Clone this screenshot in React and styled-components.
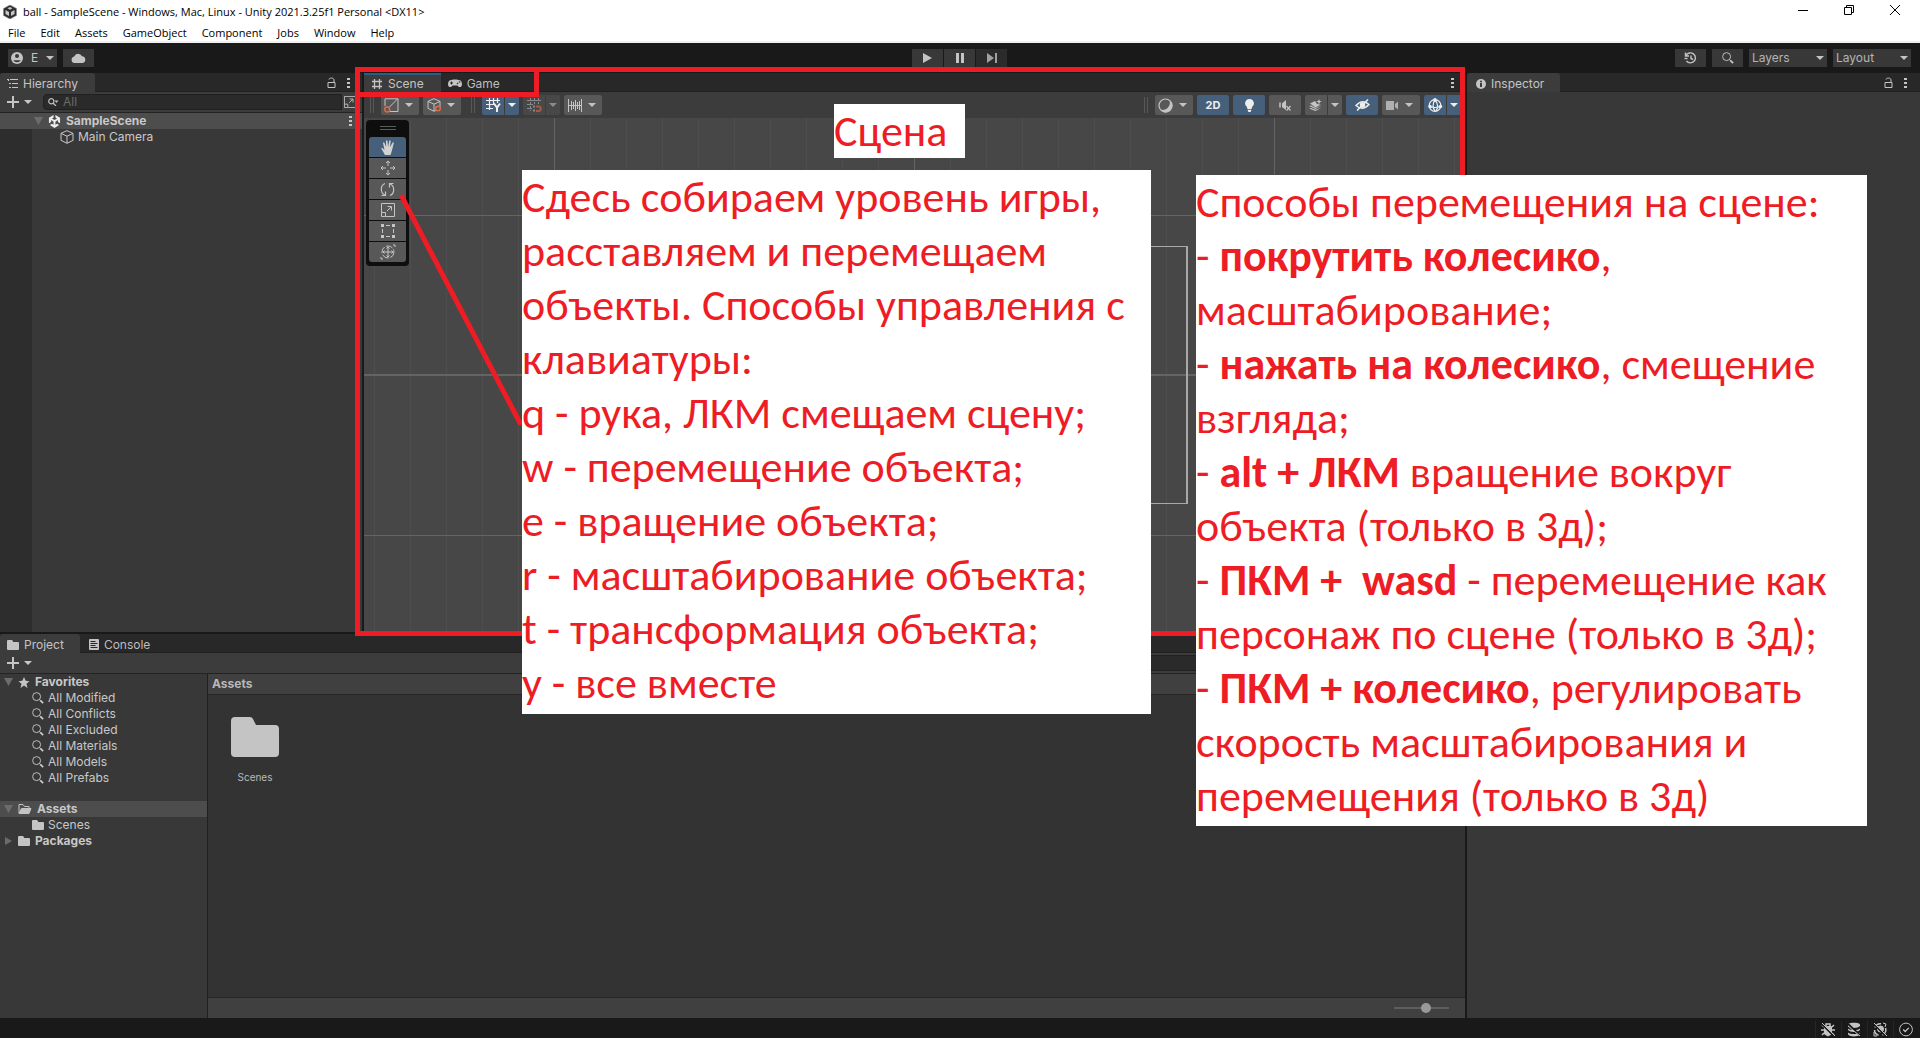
import React from 'react';
import styled, { createGlobalStyle, css } from 'styled-components';

const UI_FONT = 'Inter, "Liberation Sans", sans-serif';
const OS_FONT = '"Open Sans", "Noto Sans", sans-serif';
const NOTE_FONT = 'Carlito, Lato, "Open Sans", sans-serif';
const RED = '#ee1c24';

const GlobalStyle = createGlobalStyle`
  *, *::before, *::after { box-sizing: border-box; }
  html, body, #root { height: 100%; margin: 0; }
  body { background: #191919; overflow: hidden; color: #c8c8c8; font: 12px/16px ${UI_FONT}; }
  button, input, select { font: inherit; color: inherit; margin: 0; padding: 0; border: 0; background: none; border-radius: 0; outline: 0; }
  svg { display: block; flex: none; }
  ul { list-style: none; margin: 0; padding: 0; }
  p, h1, h2 { margin: 0; font: inherit; }
`;

const Window = styled.div`
  height: 100vh;
  display: grid;
  grid-template-rows: 43px 30px minmax(0, 1fr) 20px;
`;

/* ---------- title bar and menu ---------- */
const Chrome = styled.header`
  background: #fff;
  color: #000;
  border-bottom: 2px solid #f0f0f0;
  font: 11px/16px ${OS_FONT};
`;
const TitleRow = styled.div`
  display: flex;
  align-items: center;
  height: 24px;
  padding: 0 17px 0 3px;
  gap: 6px;
`;
const WindowTitle = styled.h1`
  flex: 1;
`;
const WindowButtons = styled.div`
  display: flex;
  gap: 30px;
  padding-bottom: 4px;
`;
const WindowButton = styled.button`
  width: 16px;
  height: 16px;
  display: grid;
  place-items: center;
`;
const MenuRow = styled.nav`
  display: flex;
  gap: 15px;
  padding: 1px 8px 0;
  button { height: 16px; }
`;

/* ---------- main toolbar ---------- */
const MainToolbar = styled.div`
  display: grid;
  grid-template-columns: 1fr auto 1fr;
  align-items: center;
  padding: 0 9px 0 8px;
  background: #191919;
`;
const ToolGroup = styled.div`
  display: flex;
  gap: ${p => p.$gap || 6}px;
  justify-content: ${p => p.$end ? 'flex-end' : 'flex-start'};
`;
const BarButton = styled.button`
  height: 18px;
  min-width: 31px;
  padding: 0 ${p => p.$pad || 0}px;
  display: flex;
  align-items: center;
  justify-content: center;
  gap: 8px;
  background: ${p => p.$dim ? '#2b2b2b' : '#383838'};
  color: ${p => p.$dim ? '#a0a0a0' : '#c4c4c4'};
`;
const SelectBox = styled.label`
  display: grid;
  align-items: center;
  width: 78px;
  height: 18px;
  background: #383838;
  color: #b4b4b4;
  select { grid-area: 1 / 1; appearance: none; width: 100%; height: 18px; padding-left: 3px; }
  svg { grid-area: 1 / 1; justify-self: end; margin-right: 3px; pointer-events: none; color: #c4c4c4; }
`;

/* ---------- docking layout ---------- */
const Workspace = styled.main`
  display: grid;
  grid-template-columns: minmax(0, 1fr) 453px;
  gap: 2px;
  min-height: 0;
`;
const LeftDock = styled.div`
  display: grid;
  grid-template-rows: minmax(0, 1fr) 384px;
  gap: 2px;
  min-height: 0;
`;
const UpperDock = styled.div`
  display: grid;
  grid-template-columns: 362px minmax(0, 1fr);
  gap: 2px;
  min-height: 0;
`;
const Panel = styled.section`
  display: flex;
  flex-direction: column;
  min-width: 0;
  min-height: 0;
  background: #383838;
  position: ${p => p.$anchor ? 'relative' : 'static'};
`;
const TabBar = styled.div`
  display: flex;
  align-items: stretch;
  height: 19px;
  flex: none;
  background: #282828;
  box-shadow: inset 0 -1px #202020;
`;
const Tab = styled.button`
  display: flex;
  align-items: center;
  gap: 5px;
  padding: 2px ${p => p.$right || 16}px 0 ${p => p.$left || 7}px;
  color: ${p => p.$active ? '#c4c4c4' : '#bdbdbd'};
  ${p => p.$active && css`background: #3c3c3c; border-radius: 3px 3px 0 0;`}
  ${p => p.$focus && css`box-shadow: inset 0 2px #2c5d87; border-radius: 0;`}
`;
const TabActions = styled.div`
  margin-left: auto;
  display: flex;
  align-items: center;
  gap: 11px;
  padding-right: ${p => p.$right}px;
  button { display: block; }
`;
const PanelToolbar = styled.div`
  display: flex;
  align-items: center;
  height: 21px;
  flex: none;
  padding: 0 0 0 7px;
  background: #3c3c3c;
  border-bottom: 1px solid #232323;
`;
const AddButton = styled.button`
  display: flex;
  align-items: center;
  gap: 5px;
  width: 36px;
`;
const SearchBox = styled.label`
  display: flex;
  align-items: center;
  gap: 4px;
  height: 16px;
  flex: ${p => p.$width ? 'none' : 1};
  width: ${p => p.$width ? p.$width + 'px' : 'auto'};
  margin-left: ${p => p.$width ? 'auto' : '0'};
  margin-right: ${p => p.$right || 0}px;
  padding-left: 4px;
  background: #2a2a2a;
  border: 1px solid #202020;
  border-radius: 4px 0 0 4px;
  input { flex: 1; min-width: 0; height: 14px; }
  input::placeholder { color: #6a6a6a; opacity: 1; }
`;
const PickerButton = styled.button`
  display: flex;
  align-items: center;
  height: 16px;
  width: 20px;
  padding-left: 2px;
`;

/* ---------- hierarchy ---------- */
const HierarchyBody = styled.ul`
  flex: 1;
  background: linear-gradient(to right, #2d2d2d 32px, #383838 32px);
`;
const Row = styled.li`
  display: flex;
  align-items: center;
  gap: ${p => p.$strong ? 5 : 4}px;
  height: 16px;
  padding-left: ${p => p.$indent || 0}px;
  padding-right: 10px;
  font-weight: ${p => p.$strong ? 700 : 400};
  background: ${p => p.$selected ? '#4d4d4d' : 'transparent'};
  margin-top: ${p => p.$apart ? 15 : 0}px;
  > :last-child:not(:nth-child(-n+3)) { margin-left: auto; }
`;

/* ---------- scene ---------- */
const SceneToolbar = styled.div`
  display: flex;
  align-items: center;
  gap: 4px;
  height: 26px;
  flex: none;
  padding-right: 4px;
  background: #3c3c3c;
`;
const Grip = styled.span`
  width: 4px;
  height: 16px;
  margin: 0 3px 0 ${p => p.$push ? 'auto' : '6px'};
  border: solid #585858;
  border-width: 0 1px;
`;
const sceneFace = css`
  height: 20px;
  display: flex;
  align-items: center;
  justify-content: center;
  background: ${p => p.$on ? '#46607c' : p.$off ? '#484848' : '#585858'};
  color: ${p => p.$on ? '#eeeeee' : p.$off ? '#8a8a8a' : '#c4c4c4'};
`;
const SceneButton = styled.button`
  ${sceneFace}
  width: ${p => p.$menu ? 38 : 32}px;
  gap: ${p => p.$menu ? 6 : 0}px;
  padding-right: ${p => p.$menu ? 3 : 0}px;
  border-radius: 2px;
  font-weight: 700;
  font-size: 11px;
`;
const Split = styled.div`
  display: grid;
  grid-template-columns: 22px 14px;
  gap: 1px;
  border-radius: 2px;
  overflow: hidden;
`;
const SplitPart = styled.button`${sceneFace}`;

const Viewport = styled.div`
  position: relative;
  flex: 1;
  overflow: hidden;
  background: #474747;
`;
const GridLines = styled.svg`
  width: 100%;
  height: 100%;
`;
const ToolPalette = styled.div`
  position: absolute;
  left: 2px;
  top: 2px;
  width: 43px;
  padding: 6px 3px 4px;
  display: grid;
  gap: 1px;
  background: #0e0e0e;
  border-radius: 4px;
`;
const PaletteGrip = styled.span`
  justify-self: center;
  width: 16px;
  height: 4px;
  margin-bottom: 6px;
  border: solid #5c5c5c;
  border-width: 1px 0;
`;
const PaletteButton = styled.button`
  ${sceneFace}
  &:nth-of-type(1) { border-radius: 3px 3px 0 0; }
  &:last-child { border-radius: 0 0 3px 3px; }
`;

/* ---------- project ---------- */
const ProjectBody = styled.div`
  flex: 1;
  min-height: 0;
  display: grid;
  grid-template-columns: 208px minmax(0, 1fr);
`;
const Tree = styled.ul`
  border-right: 1px solid #202020;
  background: #383838;
`;
const Browser = styled.div`
  display: flex;
  flex-direction: column;
  background: #333;
`;
const Crumb = styled.h2`
  height: 21px;
  padding: 2px 4px;
  font-weight: 700;
  background: #404040;
  border-bottom: 1px solid #262626;
  color: #b8b8b8;
`;
const Files = styled.div`
  flex: 1;
  padding: 22px 23px;
`;
const FileItem = styled.button`
  display: grid;
  justify-items: center;
  gap: 12px;
  width: 48px;
  font-size: 10px;
  color: #bababa;
`;
const BrowserFooter = styled.div`
  display: flex;
  justify-content: flex-end;
  align-items: center;
  height: 21px;
  padding-right: 16px;
  background: #404040;
  border-top: 1px solid #262626;
`;
const ZoomSlider = styled.input`
  appearance: none;
  width: 55px;
  height: 10px;
  background: linear-gradient(#5e5e5e, #5e5e5e) center / 100% 2px no-repeat;
  &::-webkit-slider-thumb { appearance: none; width: 10px; height: 10px; border-radius: 50%; background: #999; }
`;
const StatusBar = styled.footer`
  display: flex;
  justify-content: flex-end;
  align-items: stretch;
  padding: 3px 1px 0 0;
  background: #191919;
  color: #c4c4c4;
`;
const StatusButton = styled.button`
  display: flex;
  align-items: center;
  width: 26px;
  padding: 0 0 0 5px;
  border-left: 1px solid #262626;
`;

/* ---------- annotations drawn over the editor ---------- */
const Frame = styled.div`
  position: absolute;
  z-index: 2;
  top: -6px;
  left: -9px;
  border: 5px solid ${RED};
  pointer-events: none;
  ${p => p.$tabs ? css`width: 184px; height: 30px;` : css`right: 0; bottom: -4px;`}
`;
const Pointer = styled.svg`
  position: absolute;
  z-index: 2;
  left: 34px;
  top: 120px;
  pointer-events: none;
`;
const Note = styled.div`
  position: absolute;
  z-index: 3;
  left: ${p => p.$x}px;
  top: ${p => p.$y}px;
  width: ${p => p.$w}px;
  padding-bottom: ${p => p.$tail || 0}px;
  background: #fff;
  color: ${RED};
  font: 44px/54px ${NOTE_FONT};
  white-space: pre;
`;

/* ---------- icons ---------- */
const Svg = ({ w = 14, h = w, vb, children, ...rest }) => (
  <svg width={w} height={h} viewBox={vb || `0 0 ${w} ${h}`} fill="none" stroke="currentColor" aria-hidden="true" {...rest}>{children}</svg>
);
const Caret = ({ w = 8 }) => <Svg w={w} h={4} vb="0 0 8 4" stroke="none"><path d="M0 0h8L4 4z" fill="currentColor" /></Svg>;
const Fold = ({ open }) => <Svg w={9} h={8} stroke="none">{open ? <path d="M0 0h9L4.500 8z" fill="#6c6c6c" /> : <path d="M1 0v8l7-4z" fill="#6c6c6c" />}</Svg>;
const Dots = () => <Svg w={3} h={12} stroke="none"><path d="M0 1h3v2H0zM0 5h3v2H0zM0 9h3v2H0z" fill="#c4c4c4" /></Svg>;
const Lock = () => <Svg w={9} h={11} stroke="#c4c4c4"><path d="M1 5.500h7v5H1zM2 2.500C2 .8 7 .2 7 3v2.500" /></Svg>;
const Plus = () => <Svg w={12}><path d="M6 0v12M0 6h12" stroke="#c4c4c4" strokeWidth="2" /></Svg>;
const ListIcon = () => <Svg w={11} h={11} stroke="#c4c4c4"><path d="M3 1.500h8M5 5.500h6M5 9.500h6M0 1.500h2M2 5.500h2M2 9.500h2M1.500 1v2" /></Svg>;
const HashIcon = () => <Svg w={12}><path d="M3.500 1v10M8.500 1v10M1 3.500h10M1 8.500h10" stroke="#c4c4c4" strokeWidth="1.300" /></Svg>;
const Gamepad = () => <Svg w={14} h={9} stroke="none"><path d="M3.500 1C6 .4 8 .4 10.500 1 13 1 14 3 14 5.500 13.700 8.500 11 9 9.500 6.500h-5C3 9 .3 8.500 0 5.500 0 3 1 1 3.500 1z" fill="#c4c4c4" /><path d="M3.500 2.500v3M2 4h3" stroke="#282828" /><circle cx="9.500" cy="4.500" r=".8" fill="#282828" /><circle cx="11.500" cy="3" r=".8" fill="#282828" /></Svg>;
const InfoIcon = () => <Svg w={10} h={10} stroke="none"><circle cx="5" cy="5" r="5" fill="#c4c4c4" /><path d="M4 4h2v4H4zM4 1.700h2v1.500H4z" fill="#3c3c3c" /></Svg>;
const Magnifier = ({ w = 13 }) => <Svg w={w} vb="0 0 13 13"><circle cx="5" cy="5" r="4.300" /><path d="M8 8l1.500 1.500" /><path d="M9 9l3 3" strokeWidth="2" /></Svg>;
const SearchMini = () => <Svg w={11} h={8} stroke="#bdbdbd"><circle cx="3.300" cy="3.300" r="2.600" strokeWidth="1.200" /><path d="M5 5l3 3" strokeWidth="1.300" /><path d="M6.500 2.500h4L8.500 5z" fill="#bdbdbd" stroke="none" /></Svg>;
const ExpandIcon = ({ w = 14 }) => <Svg w={w} vb="0 0 14 14"><path d="M.5 9.500v-9h13v13H5M.5 9.500v4h4v-4zM6 8l4-4M6.500 3.500h4v4" /></Svg>;
const UnityMark = ({ w = 13, dark }) => (
  <Svg w={w} vb="0 0 14 14" stroke="none">
    {dark && <path d="M7 0l6.500 3.500v7L7 14 .5 10.500v-7z" fill="#2e2e2e" stroke="#8a8a8a" strokeWidth=".6" />}
    {dark
      ? <path d="M7 2l2.500 1.300L7 4.700 4.500 3.300zM2.500 5L6 7v4L2.500 9zM11.500 5L8 7v4l3.500-2z" fill="#c8c8c8" />
      : <path d="M6 0v2.800L4.300 3.800 7 5.400l2.700-1.600L8 2.800V0l5 3v6l-2.300-1.400V5.500L8 7.200v3.200l1.700-1L12 10.800 7 14l-5-3.200 2.300-1.400 1.700 1V7.200L3.300 5.500v2.100L1 9V3z" fill="#eee" />}
  </Svg>
);
const Cube = ({ dot }) => <Svg w={14} h={14}><path d="M7 .7l6 2.700v7L7 13.300l-6-3v-7zM1 3.400l6 2.800 6-2.800M7 6.200v7" />{dot && <circle cx="11" cy="10.500" r="2.300" stroke="#e06a45" strokeWidth="1.500" fill="#585858" />}</Svg>;
const FolderIcon = ({ w = 12, h = 10 }) => <Svg w={w} h={h} vb="0 0 48 40" stroke="none"><path d="M4 0h15q2 0 3 2l3 6h19q4 0 4 4v24q0 4-4 4H4q-4 0-4-4V4q0-4 4-4z" fill="#c4c4c4" /></Svg>;
const FolderOpen = () => <Svg w={14} h={10} stroke="#c4c4c4"><path d="M1 9V.5h4l1.500 2H11V4" /><path d="M1 9.500L3.500 4.500H13L11 9.500z" fill="#c4c4c4" /></Svg>;
const StarIcon = () => <Svg w={12} h={11} stroke="none" vb="0 0 12 12"><path d="M6 0l1.800 4.200 4.200.3-3.300 2.800L9.800 12 6 9.400 2.200 12l1.100-4.700L0 4.500l4.200-.3z" fill="#c4c4c4" /></Svg>;
const ConsoleIcon = () => <Svg w={10} h={11} stroke="none"><rect width="10" height="11" rx="1" fill="#c4c4c4" /><path d="M1.500 2.500h5M1.500 4.500h7M1.500 6.500h5M1.500 8.500h7" stroke="#282828" /></Svg>;
const PersonIcon = () => <Svg w={12} stroke="none"><circle cx="6" cy="6" r="6" fill="#c4c4c4" /><circle cx="6" cy="4" r="2" fill="#383838" /><path d="M2.300 8.200h7.400C8.500 10.800 3.500 10.800 2.300 8.200z" fill="#383838" /></Svg>;
const CloudIcon = () => <Svg w={15} h={10} stroke="none"><path d="M3.500 10a3.300 3.300 0 0 1-.3-6.500A4.200 4.200 0 0 1 11 3.300a3.400 3.400 0 0 1 .7 6.700z" fill="#c4c4c4" /></Svg>;
const HistoryIcon = () => <Svg w={13} h={12} strokeWidth="1.400"><path d="M2 3.500A5 5 0 1 1 2.500 9M1.500 .5v3.500h3.500M7 3.500v3l2 1" /><path d="M.5 6.500h3" /></Svg>;
const LineBox = () => <Svg w={15}><path d="M1 8V.8h13v12.700H6M5 9.500l8.500-8.500" /><circle cx="3.200" cy="11.500" r="2.500" stroke="#e06a45" strokeWidth="1.500" /></Svg>;
const GridY = () => <Svg w={15} h={14}><path d="M3.500 0v12M7.500 0v7M11.500 0v5M0 2.500h14M0 6.500h7M0 10.500h7" strokeWidth="1.200" /><path d="M8 5.500l3 4 3-4M11 9v5" strokeWidth="2" /></Svg>;
const GridSnap = () => <Svg w={15} h={14}><path d="M3.500 0v13M7.500 0v6M11.500 0v6M0 2.500h14M0 6.500h6M0 10.500h5" strokeDasharray="3 1" /><path d="M9 8.500h2.500a2 2 0 0 1 0 4.500H9" stroke="#a05c4a" strokeWidth="2" /><path d="M6 8.500h2M6 12.500h2" strokeWidth="2" /></Svg>;
const SnapRuler = () => <Svg w={14} h={13}><path d="M.5 0v13M13.500 0v13M3.500 2v9M5.500 3v7M7.500 1v11M9.500 3v7M11.500 2v9M0 6.500h14" /></Svg>;
const Sphere = () => <Svg w={15} stroke="none" vb="0 0 15 15"><circle cx="7.500" cy="7.500" r="6.500" stroke="#c4c4c4" strokeWidth="1.200" /><path d="M11.500 2.500a6.500 6.500 0 1 1-9 9c4.500 2 11-3 9-9z" fill="#c4c4c4" /></Svg>;
const Bulb = () => <Svg w={9} h={13} stroke="none"><path d="M4.500 0a4.300 4.300 0 0 1 2.700 7.700L6.500 10h-4l-.7-2.300A4.300 4.300 0 0 1 4.500 0zM2.800 10.700h3.400v1L5.500 13h-2l-.7-1.300z" fill="currentColor" /></Svg>;
const Mute = () => <Svg w={12} h={11}><path d="M1 2.500v5" strokeWidth="1.500" /><path d="M3 3.500L7 0v10L3 7z" fill="currentColor" stroke="none" /><path d="M7.500 6l4 4.500M11.500 6l-4 4.500" strokeWidth="1.200" /></Svg>;
const Layers = () => <Svg w={14} h={12} stroke="none"><path d="M1 4.500L6 2l2 3 4 .5-5.500 3zM0 7l2-.5L6.500 9 13 6.500 6.500 10zM0 9.500L2 9l4.500 1.700L12 9l-5.500 3zM10 0l.8 2 2.200.5-2.200.8L10 5.500l-.8-2.200L7 2.500 9.200 2z" fill="currentColor" /></Svg>;
const EyeOff = () => <Svg w={15} h={12} strokeWidth="1.500"><path d="M1 6.500Q7.500-.5 14 5.500 7.500 12.500 1 6.500z" /><circle cx="7.500" cy="6" r="2" fill="currentColor" /><path d="M2 11.500L13 .5" /></Svg>;
const Camera = () => <Svg w={13} h={9} stroke="none"><path d="M0 0h8v9H0zM9 3l3-2.500v8L9 6z" fill="#b0b0b0" /></Svg>;
const Gizmo = () => <Svg w={15} strokeWidth="1.200"><circle cx="7" cy="7.500" r="5.800" /><path d="M1 8c3 2 9 2 12 0M7 2C4.500 5 4.500 10 7 13M7 2c3 3 3.500 8 1 11" /><circle cx="7" cy="1.800" r="1.700" fill="currentColor" stroke="none" /><circle cx="2" cy="8.500" r="1.700" fill="currentColor" stroke="none" /><circle cx="12.500" cy="8.500" r="1.700" fill="currentColor" stroke="none" /></Svg>;
const Hand = () => <Svg w={14} h={15} stroke="none"><path d="M4 15L.3 8.500q.3-1.300 1.700 0L3.500 10 2 3q.6-1.300 1.500 0l1.700 4L5 1q.8-1.300 1.500 0l.6 6L8.200.8q1-1 1.500.2L9 7.300 11.600 2.500q1-.6 1.200.5l-1.600 6.500L10.500 12 9.500 15z" fill="#d2d2d2" /></Svg>;
const MoveIcon = () => <Svg w={16}><path d="M8 1v5M8 10v5M1 8h5M10 8h5M6 3l2-2 2 2M6 13l2 2 2-2M3 6L1 8l2 2M13 6l2 2-2 2" /></Svg>;
const RotateIcon = () => <Svg w={15} strokeWidth="1.200"><path d="M5.500 13.500C-.5 11 .5 3 5 1.500M9.500 1.500C15.500 4 14.500 12 10 13.500M1.500 13.500h4v-4M13.500 1.500h-4v4" /></Svg>;
const RectIcon = () => <Svg w={14}><path d="M5 1.500h4M5 12.500h4M1.500 5v4M12.500 5v4" /><path d="M0 0h3v3H0zM11 0h3v3h-3zM0 11h3v3H0zM11 11h3v3h-3z" fill="currentColor" stroke="none" /></Svg>;
const TransformIcon = () => <Svg w={16}><circle cx="8" cy="8" r="6" strokeDasharray="7 1.500" /><path d="M8 3v10M3 8h10M6.500 4.500L8 3l1.500 1.500M6.500 11.500L8 13l1.500-1.500M4.500 6.500L3 8l1.500 1.500M11.500 6.500L13 8l-1.500 1.500M13 1h2v2M1 13v2h2" /></Svg>;
const Bug = () => <Svg w={14} h={15}><path d="M3.500 4.500h7V12L7 14l-3.500-2z" fill="currentColor" /><path d="M5 4V2h4v2M1 3l2 2M13 3l-2 2M0 8h14M1 13l2-2M13 13l-2-2" strokeWidth="1.500" /><path d="M0 1l13 13" stroke="#191919" strokeWidth="2" /><path d="M1 1l13 13" /></Svg>;
const Cache = () => <Svg w={14} h={15} stroke="none"><path d="M1 2.500C1 0 13 0 13 2.500V4C11 6.500 3 6.500 1 4zM1 6.500c2 2 10 2 12 0V8c-2 2.500-10 2.500-12 0zM1 10.500c2 2 10 2 12 0v2c-2 2.500-10 2.500-12 0z" fill="currentColor" /><path d="M1 2l13 12" stroke="#191919" strokeWidth="2" /><path d="M1 4l12 10" stroke="currentColor" /></Svg>;
const LightOff = () => <Svg w={14} h={15}><path d="M2 5.500C3 3 5 1.500 8 1.800M12.500 6c1 3-.5 6-3 7M1.500 8c0 2 1.500 4.500 4 5.200" strokeWidth="1.500" /><circle cx="7.500" cy="7" r="3" fill="currentColor" /><path d="M0 1l13 13" stroke="#191919" strokeWidth="2" /><path d="M1 1l13 13M10 1l3 1-1 3M1 10v4h3" /></Svg>;
const CheckCircle = () => <Svg w={14} h={15}><circle cx="7" cy="7.500" r="6.400" /><path d="M4.200 7.500l2 2 3.600-3.600" strokeWidth="1.300" /></Svg>;

const menus = ['File', 'Edit', 'Assets', 'GameObject', 'Component', 'Jobs', 'Window', 'Help'];
const favorites = ['All Modified', 'All Conflicts', 'All Excluded', 'All Materials', 'All Models', 'All Prefabs'];
const tools = [['Move', MoveIcon], ['Rotate', RotateIcon], ['Scale', ExpandIcon], ['Rect', RectIcon], ['Transform', TransformIcon]];

const SplitButton = ({ label, icon, on, off }) => (
  <Split>
    <SplitPart $on={on} $off={off} aria-label={label}>{icon}</SplitPart>
    <SplitPart $on={on} $off={off} aria-label={`${label} options`}><Caret /></SplitPart>
  </Split>
);
const MenuButton = ({ label, icon }) => <SceneButton $menu aria-label={label}>{icon}<Caret /></SceneButton>;

const SceneGrid = () => (
  <GridLines aria-hidden="true">
    <defs>
      <pattern id="minor" x="10" y="0" width="36" height="32" patternUnits="userSpaceOnUse">
        <path d="M.5 0v32" stroke="#4e4e4e" />
      </pattern>
      <pattern id="major" x="190" y="97" width="360" height="160" patternUnits="userSpaceOnUse">
        <path d="M.5 0v160M0 .5h360" stroke="#646464" />
      </pattern>
    </defs>
    <rect width="100%" height="100%" fill="url(#minor)" />
    <rect width="100%" height="100%" fill="url(#major)" />
    <path d="M0 257h1200" stroke="#646464" strokeWidth="2" />
    <path d="M277 128.500h546M277 385.500h546" stroke="#a8a8a8" />
    <path d="M823 128v258M277 128v258" stroke="#a8a8a8" strokeWidth="2" />
  </GridLines>
);

function Hierarchy() {
  return (
    <Panel>
      <TabBar>
        <Tab $active $right={17}><ListIcon />Hierarchy</Tab>
        <TabActions $right={12}><button aria-label="Lock hierarchy"><Lock /></button><button aria-label="Hierarchy menu"><Dots /></button></TabActions>
      </TabBar>
      <PanelToolbar>
        <AddButton aria-label="Create"><Plus /><Caret /></AddButton>
        <SearchBox><SearchMini /><input aria-label="Search hierarchy" placeholder="All" /></SearchBox>
        <PickerButton aria-label="Open search"><ExpandIcon w={12} /></PickerButton>
      </PanelToolbar>
      <HierarchyBody>
        <Row $selected $strong $indent={34}><Fold open /><UnityMark /><span>SampleScene</span><Dots /></Row>
        <Row $indent={60}><Cube /><span>Main Camera</span></Row>
      </HierarchyBody>
    </Panel>
  );
}

function Scene() {
  return (
    <Panel $anchor>
      <TabBar>
        <Tab $active $focus $right={17}><HashIcon />Scene</Tab>
        <Tab><Gamepad />Game</Tab>
        <TabActions $right={11}><button aria-label="Scene menu"><Dots /></button></TabActions>
      </TabBar>
      <SceneToolbar>
        <Grip />
        <MenuButton label="Pivot" icon={<LineBox />} />
        <MenuButton label="Orientation" icon={<Cube dot />} />
        <Grip />
        <SplitButton on label="Grid" icon={<GridY />} />
        <SplitButton off label="Grid snapping" icon={<GridSnap />} />
        <MenuButton label="Snap increment" icon={<SnapRuler />} />
        <Grip $push />
        <MenuButton label="Draw mode" icon={<Sphere />} />
        <SceneButton $on>2D</SceneButton>
        <SceneButton $on aria-label="Lighting"><Bulb /></SceneButton>
        <SceneButton aria-label="Audio"><Mute /></SceneButton>
        <SplitButton label="Effects" icon={<Layers />} />
        <SceneButton $on aria-label="Hidden objects"><EyeOff /></SceneButton>
        <MenuButton label="Camera" icon={<Camera />} />
        <SplitButton on label="Gizmos" icon={<Gizmo />} />
      </SceneToolbar>
      <Viewport>
        <SceneGrid />
        <ToolPalette>
          <PaletteGrip />
          <PaletteButton $on aria-label="Hand"><Hand /></PaletteButton>
          {tools.map(([name, Icon]) => <PaletteButton key={name} aria-label={name}><Icon /></PaletteButton>)}
        </ToolPalette>
      </Viewport>

      <Frame />
      <Frame $tabs />
      <Pointer width="128" height="236"><path d="M4 4l118 226" stroke={RED} strokeWidth="5" strokeLinecap="round" /></Pointer>
      <Note $x={470} $y={31} $w={131}><p>Сцена</p></Note>
      <Note $x={158} $y={97} $w={629} $tail={4}>
        <p>Сдесь собираем уровень игры,</p>
        <p>расставляем и перемещаем</p>
        <p>объекты. Способы управления с</p>
        <p>клавиатуры:</p>
        <p>q - рука, ЛКМ смещаем сцену;</p>
        <p>w - перемещение объекта;</p>
        <p>e - вращение объекта;</p>
        <p>r - масштабирование объекта;</p>
        <p>t - трансформация объекта;</p>
        <p>y - все вместе</p>
      </Note>
      <Note $x={832} $y={102} $w={671} $tail={3}>
        <p>Способы перемещения на сцене:</p>
        <p>- <b>покрутить колесико</b>,</p>
        <p>масштабирование;</p>
        <p>- <b>нажать на колесико</b>, смещение</p>
        <p>взгляда;</p>
        <p>- <b>alt + ЛКМ</b> вращение вокруг</p>
        <p>объекта (только в 3д);</p>
        <p>- <b>ПКМ +  wasd</b> - перемещение как</p>
        <p>персонаж по сцене (только в 3д);</p>
        <p>- <b>ПКМ + колесико</b>, регулировать</p>
        <p>скорость масштабирования и</p>
        <p>перемещения (только в 3д)</p>
      </Note>
    </Panel>
  );
}

function Project() {
  return (
    <Panel>
      <TabBar>
        <Tab $active><FolderIcon />Project</Tab>
        <Tab $left={9}><ConsoleIcon />Console</Tab>
      </TabBar>
      <PanelToolbar>
        <AddButton aria-label="Create asset"><Plus /><Caret /></AddButton>
        <SearchBox $width={440} $right={130}><SearchMini /><input aria-label="Search project" /></SearchBox>
      </PanelToolbar>
      <ProjectBody>
        <Tree>
          <Row $strong $indent={4}><Fold open /><StarIcon /><span>Favorites</span></Row>
          {favorites.map(name => <Row key={name} $indent={32}><Magnifier w={12} /><span>{name}</span></Row>)}
          <Row $strong $selected $apart $indent={4}><Fold open /><FolderOpen /><span>Assets</span></Row>
          <Row $indent={32}><FolderIcon /><span>Scenes</span></Row>
          <Row $strong $indent={4}><Fold /><FolderIcon /><span>Packages</span></Row>
        </Tree>
        <Browser>
          <Crumb>Assets</Crumb>
          <Files><FileItem><FolderIcon w={48} h={40} />Scenes</FileItem></Files>
          <BrowserFooter><ZoomSlider type="range" aria-label="Icon size" defaultValue="60" /></BrowserFooter>
        </Browser>
      </ProjectBody>
    </Panel>
  );
}

export default function App() {
  return (
    <Window>
      <GlobalStyle />
      <Chrome>
        <TitleRow>
          <UnityMark dark w={14} />
          <WindowTitle>ball - SampleScene - Windows, Mac, Linux - Unity 2021.3.25f1 Personal &lt;DX11&gt;</WindowTitle>
          <WindowButtons>
            <WindowButton aria-label="Minimize"><Svg w={10}><path d="M0 5.500h10" /></Svg></WindowButton>
            <WindowButton aria-label="Restore"><Svg w={10}><path d="M.5 2.500h7v7h-7zM2.500 2.500v-2h7v7h-2" /></Svg></WindowButton>
            <WindowButton aria-label="Close"><Svg w={10}><path d="M0 0l10 10M10 0L0 10" /></Svg></WindowButton>
          </WindowButtons>
        </TitleRow>
        <MenuRow>{menus.map(m => <button key={m}>{m}</button>)}</MenuRow>
      </Chrome>

      <MainToolbar>
        <ToolGroup>
          <BarButton $pad={3}><PersonIcon />E<Caret /></BarButton>
          <BarButton aria-label="Cloud"><CloudIcon /></BarButton>
        </ToolGroup>
        <ToolGroup $gap={1}>
          <BarButton aria-label="Play"><Svg w={9} h={10} stroke="none"><path d="M0 0l9 5-9 5z" fill="currentColor" /></Svg></BarButton>
          <BarButton aria-label="Pause"><Svg w={8} h={10} stroke="none"><path d="M0 0h3v10H0zM5 0h3v10H5z" fill="currentColor" /></Svg></BarButton>
          <BarButton $dim aria-label="Step"><Svg w={10} h={10} stroke="none"><path d="M0 0l7 5-7 5zM8 0h2v10H8z" fill="currentColor" /></Svg></BarButton>
        </ToolGroup>
        <ToolGroup $end>
          <BarButton aria-label="Undo history"><HistoryIcon /></BarButton>
          <BarButton aria-label="Search"><Magnifier w={12} /></BarButton>
          <SelectBox><select aria-label="Layers"><option>Layers</option></select><Caret /></SelectBox>
          <SelectBox><select aria-label="Layout"><option>Layout</option></select><Caret /></SelectBox>
        </ToolGroup>
      </MainToolbar>

      <Workspace>
        <LeftDock>
          <UpperDock>
            <Hierarchy />
            <Scene />
          </UpperDock>
          <Project />
        </LeftDock>
        <Panel>
          <TabBar>
            <Tab $active $left={9}><InfoIcon />Inspector</Tab>
            <TabActions $right={13}><button aria-label="Lock inspector"><Lock /></button><button aria-label="Inspector menu"><Dots /></button></TabActions>
          </TabBar>
        </Panel>
      </Workspace>

      <StatusBar>
        <StatusButton aria-label="Debugger"><Bug /></StatusButton>
        <StatusButton aria-label="Cache server"><Cache /></StatusButton>
        <StatusButton aria-label="Auto lighting"><LightOff /></StatusButton>
        <StatusButton aria-label="Activity"><CheckCircle /></StatusButton>
      </StatusBar>
    </Window>
  );
}
